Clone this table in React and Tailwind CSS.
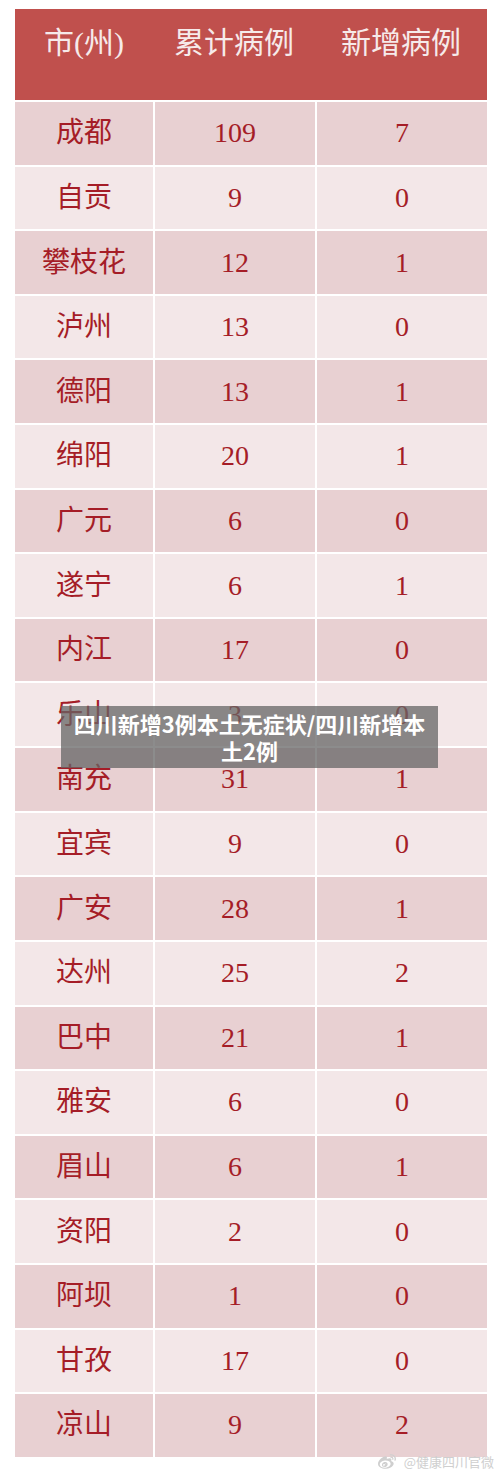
import React from 'react';
import { FaWeibo } from 'react-icons/fa';

const rows = [
  ['成都', '109', '7'],
  ['自贡', '9', '0'],
  ['攀枝花', '12', '1'],
  ['泸州', '13', '0'],
  ['德阳', '13', '1'],
  ['绵阳', '20', '1'],
  ['广元', '6', '0'],
  ['遂宁', '6', '1'],
  ['内江', '17', '0'],
  ['乐山', '3', '0'],
  ['南充', '31', '1'],
  ['宜宾', '9', '0'],
  ['广安', '28', '1'],
  ['达州', '25', '2'],
  ['巴中', '21', '1'],
  ['雅安', '6', '0'],
  ['眉山', '6', '1'],
  ['资阳', '2', '0'],
  ['阿坝', '1', '0'],
  ['甘孜', '17', '0'],
  ['凉山', '9', '2'],
];

function App() {
  return (
    <div className="relative w-[500px] h-[1475px] bg-white overflow-hidden font-['Liberation_Serif','Noto_Sans_CJK_SC',serif]">
      <div className="pt-[9px] pl-[15px] w-[487px]">
        {/* header */}
        <div className="h-[91px] bg-[#c0504d] grid grid-cols-[138px_162px_172px] text-[#f6eaea] text-[30px] leading-none">
          <div className="text-center pt-[19px]">市(州)</div>
          <div className="text-center pt-[19px]">累计病例</div>
          <div className="text-center pt-[19px]">新增病例</div>
        </div>

        {/* rows */}
        {rows.map((r, i) => (
          <div
            key={r[0]}
            className={`h-[64.62px] grid grid-cols-[138px_162px_172px] border-t-2 border-white text-[#a51d27] ${i % 2 === 0 ? 'bg-[#e8d0d2]' : 'bg-[#f3e7e8]'}`}
          >
            <div className="flex items-center justify-center text-[28px]">{r[0]}</div>
            <div className="flex items-center justify-center text-[28px] border-l-2 border-white">{r[1]}</div>
            <div className="flex items-center justify-center text-[28px] border-l-2 border-white">{r[2]}</div>
          </div>
        ))}
      </div>

      {/* watermark */}
      <div className="-mt-[4px] flex justify-end items-center gap-[6px] pr-[6px] text-[#cfcfcf] text-[13px] leading-[16px] font-['Noto_Sans_CJK_SC',sans-serif]">
        <FaWeibo className="w-[22px] h-[18px]" />
        <span>@健康四川官微</span>
      </div>

      {/* caption overlay */}
      <div className="absolute left-[61px] top-[706px] w-[377px] h-[62px] bg-[#666]/75 flex items-center justify-center px-[10px]">
        <p className="text-white text-[22px] font-bold leading-[27px] text-center font-['Noto_Sans_CJK_SC',sans-serif]">
          四川新增3例本土无症状/四川新增本土2例
        </p>
      </div>
    </div>
  );
}

export default App;
